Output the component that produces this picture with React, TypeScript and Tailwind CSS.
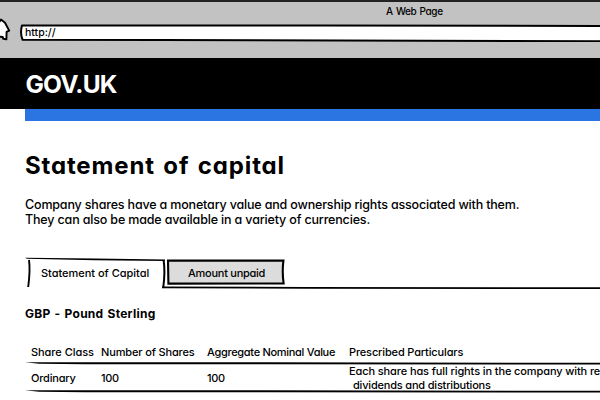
import type { ReactNode } from 'react';

function Home() {
  return (
    <svg width="11" height="26" viewBox="0 0 11 26" className="block shrink-0">
      <path
        d="M-8 13 L1 1.6 L5 4.8 L9.2 12.6 L6.6 13.8 L6.4 21.4 L3.2 20.8 L2.8 19 L-2 18.6"
        fill="#fff"
        stroke="#000"
        strokeWidth="1.9"
        strokeLinejoin="round"
      />
    </svg>
  );
}

function AddressBar() {
  return (
    <div className="relative h-[18px] w-[580px] shrink-0">
      <svg width="580" height="18" viewBox="0 0 580 18" className="absolute inset-0">
        <path
          d="M600 2 L300 1.6 L2 1.4 Q-0.2 9 2.6 15.8 L140 16 L320 16.6 L600 17.2"
          fill="#fff"
          stroke="#000"
          strokeWidth="2"
          strokeLinejoin="round"
        />
      </svg>
      <span className="relative block pt-[1px] pl-[5px] text-[10.5px] leading-4 font-medium">http://</span>
    </div>
  );
}

function Rule() {
  return (
    <svg width="575" height="3" viewBox="0 0 575 3" className="block shrink-0">
      <path d="M0 .2 L240 .3 L575 .8 L575 2.5 L240 2.3 L60 2.2 L14 1.8 Z" fill="#000" />
    </svg>
  );
}

function Cell({ className, children }: { className: string; children: ReactNode }) {
  return <div className={`shrink-0 text-[11px] leading-4 whitespace-nowrap ${className}`}>{children}</div>;
}

export default function App() {
  return (
    <div className="h-[400px] w-[600px] overflow-hidden bg-white font-['Inter','Liberation_Sans',sans-serif] font-[450] text-black [font-feature-settings:'cv11']">
      <header className="h-[58px] border-t-2 border-[#222] bg-[#c2c2c2]">
        <div className="h-[16px] pl-[386px] text-[10px] leading-[18px] tracking-[-0.4px] [word-spacing:1px]">
          A Web Page
        </div>
        <div className="flex items-start">
          <Home />
          <div className="ml-[9px] pt-[6px]">
            <AddressBar />
          </div>
        </div>
      </header>

      <div className="h-[51px] bg-black pt-[10px] pl-[25.5px] text-[24.5px] leading-[33px] font-bold tracking-[-0.8px] text-white">
        GOV.UK
      </div>
      <div className="ml-[25px] h-[12px] bg-[#2b75e3]" />

      <main className="pl-[25px]">
        <h1 className="pt-[29px] text-[24px] leading-8 font-bold tracking-[0.85px] [word-spacing:2px]">
          Statement of capital
        </h1>
        <p className="pt-[15px] text-[12.5px] leading-[15px] whitespace-nowrap">
          <span className="block tracking-[-0.17px]">
            Company shares have a monetary value and ownership rights associated with them.
          </span>
          <span className="block tracking-[-0.16px]">They can also be made available in a variety of currencies.</span>
        </p>

        <div className="relative mt-[29px] flex h-[34px]">
          <svg width="575" height="34" viewBox="0 0 575 34" className="absolute inset-0">
            <path d="M0 1.8 L70 2.4 L140 3.4 L140 5 L70 4.2 L2 2.8 Z" fill="#000" />
            <path d="M4 4 Q5.4 14 3.2 31" fill="none" stroke="#000" strokeWidth="1.9" />
            <path d="M138.6 4 Q140.4 16 138.2 32" fill="none" stroke="#000" strokeWidth="2" />
            <path d="M143 4.6 L258.4 4.6 Q257 16 258.6 27.4 L143.4 27.6 Z" fill="#dcdcdc" stroke="#000" strokeWidth="2.1" />
            <path d="M137 31.3 L280 31.8 L575 32.2" fill="none" stroke="#000" strokeWidth="1.7" />
          </svg>
          <div className="relative w-[142px] pt-[9px] pl-[16px] text-[11px] leading-4 tracking-[-0.02px] whitespace-nowrap">
            Statement of Capital
          </div>
          <div className="relative pt-[9px] pl-[21px] text-[11px] leading-4 tracking-[-0.26px] whitespace-nowrap">
            Amount unpaid
          </div>
        </div>

        <h2 className="mt-[16px] text-[12px] leading-4 font-bold tracking-[0.26px] [word-spacing:1px]">
          GBP - Pound Sterling
        </h2>

        <div className="mt-[22px] flex h-[18px] pl-[6px]">
          <Cell className="w-[70px] tracking-[-0.05px]">Share Class</Cell>
          <Cell className="w-[106px] tracking-[-0.14px]">Number of Shares</Cell>
          <Cell className="w-[142px] tracking-[-0.3px]">Aggregate Nominal Value</Cell>
          <Cell className="tracking-[-0.15px]">Prescribed Particulars</Cell>
        </div>
        <Rule />
        <div className="flex h-[25px] pl-[6px]">
          <Cell className="w-[70px] pt-[5px] tracking-[-0.2px]">Ordinary</Cell>
          <Cell className="w-[106px] pt-[5px] tracking-[-0.3px]">100</Cell>
          <Cell className="w-[142px] pt-[5px] tracking-[-0.3px]">100</Cell>
          <div className="-mt-px shrink-0 text-[11px] leading-[14px] whitespace-nowrap">
            <div className="tracking-[-0.11px]">Each share has full rights in the company with re</div>
            <div className="pl-[4px] tracking-[-0.19px]">dividends and distributions</div>
          </div>
        </div>
        <Rule />
      </main>
    </div>
  );
}
